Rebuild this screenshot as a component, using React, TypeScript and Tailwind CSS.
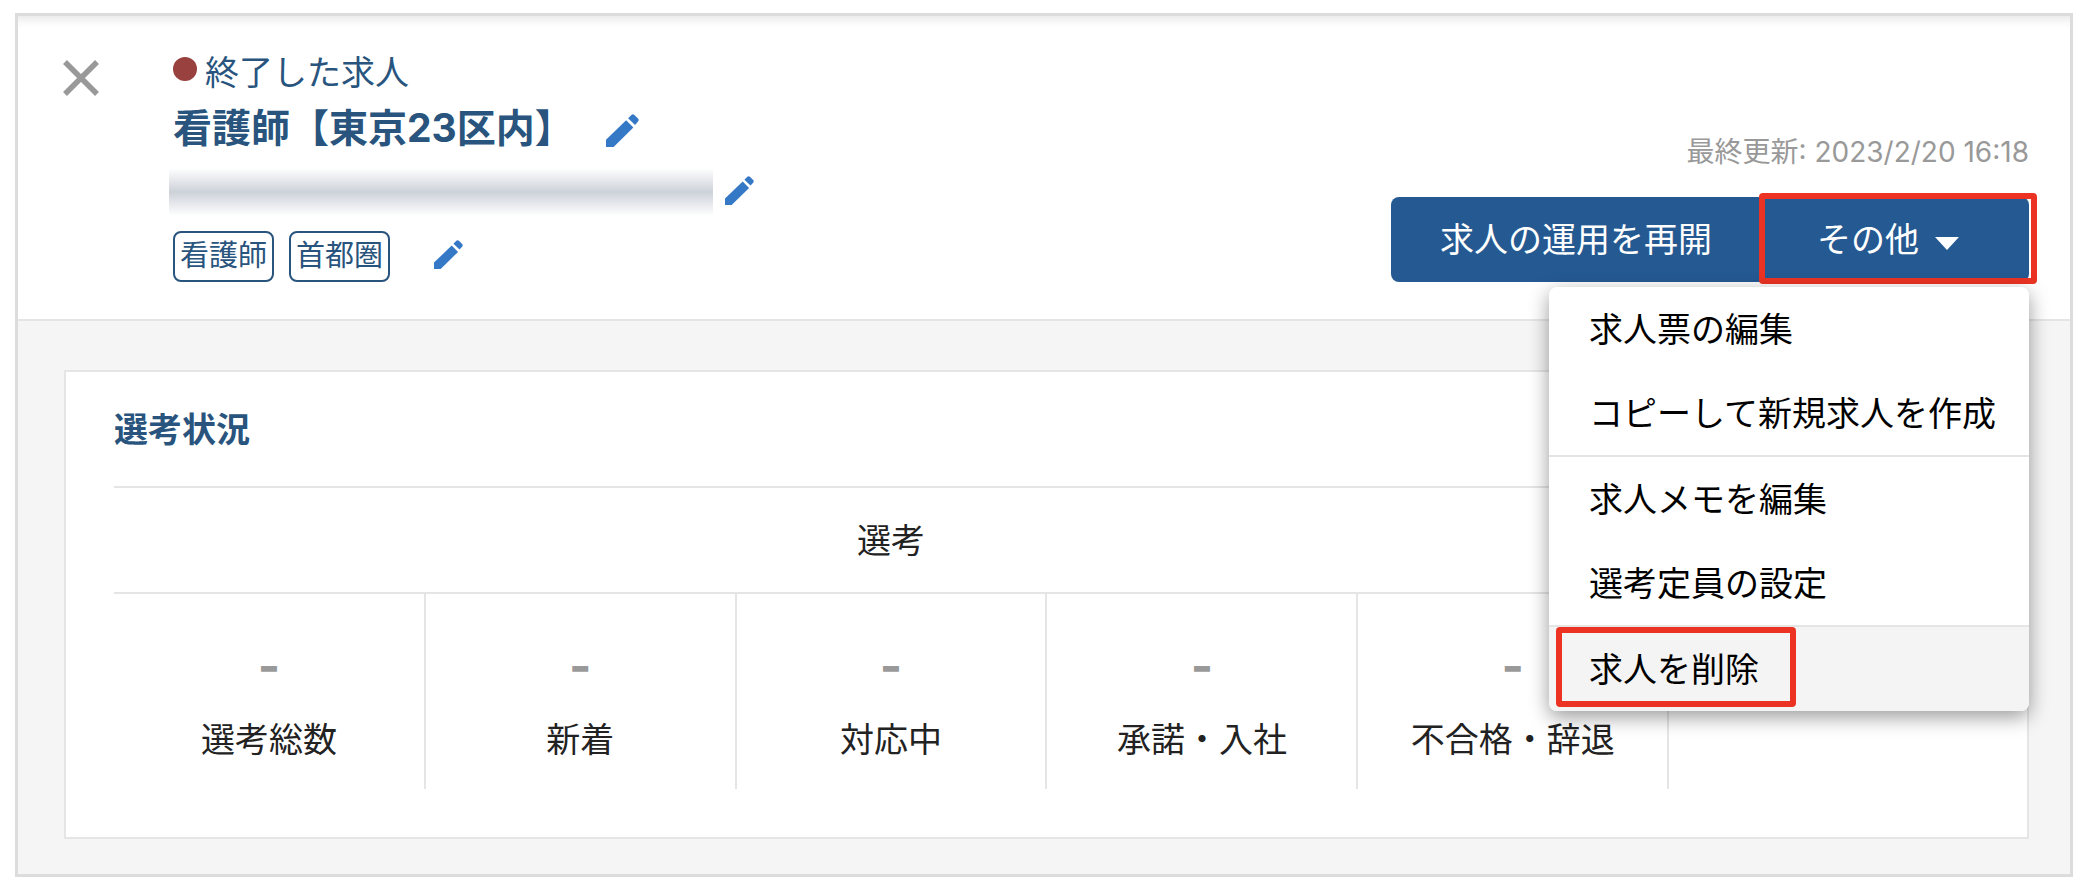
import clsx from "clsx";

const TAGS = ["看護師", "首都圏"];

const STATS = ["選考総数", "新着", "対応中", "承諾・入社", "不合格・辞退"];

const MENU = [
  ["求人票の編集", "コピーして新規求人を作成"],
  ["求人メモを編集", "選考定員の設定"],
  ["求人を削除"],
];

const DANGER = "求人を削除";

function EditButton({ label, large = false }: { label: string; large?: boolean }) {
  return (
    <button
      type="button"
      aria-label={label}
      className={clsx("text-[#3578c6]", large ? "mt-1" : "mb-1")}
    >
      <svg
        viewBox="0 0 100 100"
        className={large ? "size-[33px]" : "size-[29px]"}
        fill="currentColor"
      >
        <path d="M0 78V100H23L83 41L61 19Z" />
        <path d="M67 13L77 3Q81 -1 86 3L97 14Q101 18 97 23L88 33Z" />
      </svg>
    </button>
  );
}

function MoreMenu() {
  return (
    <ul className="absolute top-full right-0 z-10 mt-[5px] w-[480px] overflow-hidden rounded-lg bg-white text-black shadow-[0_6px_20px_rgba(0,0,0,0.4)]">
      {MENU.map((group, i) => (
        <li key={i} className={clsx(i > 0 && "border-t-2 border-[#e5e5e5]")}>
          <ul>
            {group.map((item) => (
              <li key={item}>
                <button
                  type="button"
                  className={clsx(
                    "relative flex h-[84px] w-full items-center px-10 whitespace-nowrap",
                    item === DANGER && "bg-[#f4f4f4]",
                  )}
                >
                  {item}
                  {item === DANGER && (
                    <span className="absolute top-0 left-[7px] h-20 w-60 rounded-sm border-[6px] border-[#ec3323]" />
                  )}
                </button>
              </li>
            ))}
          </ul>
        </li>
      ))}
    </ul>
  );
}

function JobHeader() {
  return (
    <header className="flex justify-between border-b-2 border-[#e5e5e5] bg-white pt-8 pr-[41px] pb-[31px] pl-[45px] shadow-[inset_0_12px_12px_-10px_rgba(0,0,0,0.12)]">
      <div className="flex items-start">
        <button type="button" aria-label="閉じる" className="mt-3 text-[#999]">
          <svg viewBox="0 0 36 36" className="size-9" stroke="currentColor" strokeWidth="5.5">
            <path d="M2 2 34 34M34 2 2 34" />
          </svg>
        </button>
        <div className="ml-[74px] text-[#28547d]">
          <p className="flex h-12 items-center gap-2">
            <span className="-mt-1.5 size-6 rounded-full bg-[#98413e]" />
            終了した求人
          </p>
          <div className="flex h-16 items-center gap-8">
            <h1 className="text-[39px] font-bold">看護師【東京23区内】</h1>
            <EditButton label="求人名を編集" large />
          </div>
          <div className="-ml-1 flex h-16 items-center gap-3">
            <span className="h-12 w-[544px] bg-linear-to-b from-white via-[#cdd2d9] to-white" />
            <EditButton label="説明を編集" />
          </div>
          <div className="flex h-16 items-center gap-11">
            <div className="flex gap-[15px]">
              {TAGS.map((tag) => (
                <span
                  key={tag}
                  className="flex h-[51px] items-center rounded-lg border-2 border-[#28547d] px-[5px] text-[29px]"
                >
                  {tag}
                </span>
              ))}
            </div>
            <EditButton label="タグを編集" />
          </div>
        </div>
      </div>

      <div className="flex flex-col items-end">
        <p className="mt-[83px] text-[28px] leading-[42px] text-[#999]">最終更新: 2023/2/20 16:18</p>
        <div className="relative mt-6 flex h-[85px] text-white">
          <button type="button" className="w-[370px] rounded-l-lg bg-[#255992]">
            求人の運用を再開
          </button>
          <div className="relative">
            <button
              type="button"
              aria-expanded="true"
              className="flex h-full w-[268px] items-center gap-4 rounded-r-lg bg-[#255992] pl-14"
            >
              その他
              <svg viewBox="0 0 24 13" className="mt-2 w-6" fill="currentColor">
                <path d="M0 0h24L12 13z" />
              </svg>
            </button>
            <span className="absolute -top-1 -right-2 -bottom-0.5 -left-0.5 rounded-sm border-[6px] border-[#ec3323]" />
          </div>
          <MoreMenu />
        </div>
      </div>
    </header>
  );
}

function SelectionStatus() {
  return (
    <section className="border-2 border-[#e5e5e5] bg-white px-12 pb-12">
      <h2 className="flex h-[114px] items-center font-bold text-[#28547d]">選考状況</h2>
      <table className="w-full table-fixed border-t-2 border-[#e5e5e5] text-[#222]">
        <thead>
          <tr className="h-[106px] border-b-2 border-[#e5e5e5]">
            <th colSpan={5} className="font-normal">
              選考
            </th>
            <th />
          </tr>
        </thead>
        <tbody>
          <tr className="h-[196px]">
            {STATS.map((name) => (
              <td key={name} className="border-r-2 border-[#e5e5e5] pt-6 text-center">
                <div className="text-5xl font-bold text-[#999]">-</div>
                <div className="mt-6">{name}</div>
              </td>
            ))}
            <td />
          </tr>
        </tbody>
      </table>
    </section>
  );
}

export default function App() {
  return (
    <main className="min-h-screen bg-white pt-[13px] pr-[9px] pb-3 pl-[15px] font-[Inter,'Noto_Sans_CJK_JP',sans-serif] text-[34px]">
      <div className="border-[3px] border-[#dcdcdc] bg-[#f5f5f5]">
        <JobHeader />
        <div className="pt-[49px] pr-[41px] pb-[35px] pl-[46px]">
          <SelectionStatus />
        </div>
      </div>
    </main>
  );
}
